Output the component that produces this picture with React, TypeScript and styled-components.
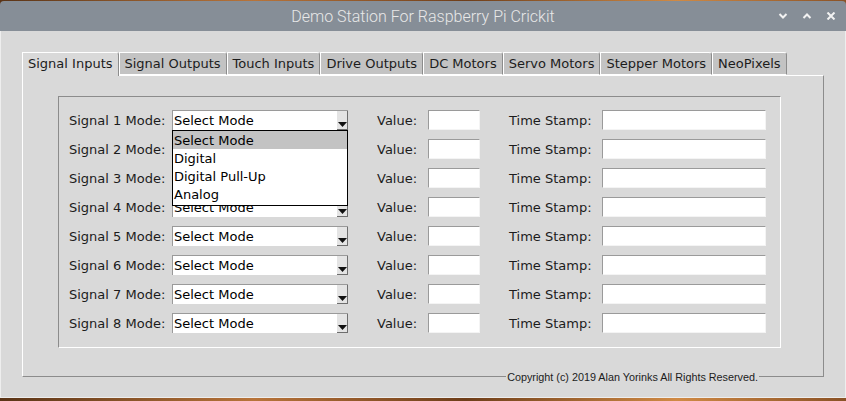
import React from "react";
import styled, { createGlobalStyle } from "styled-components";

const GlobalStyle = createGlobalStyle`
  html, body {
    margin: 0;
    padding: 0;
    overflow: hidden;
  }
  body {
    width: 846px;
    height: 401px;
    background: linear-gradient(90deg, #5a3417 0%, #b8743a 30%, #6e3e1a 55%, #d08a45 80%, #8a5226 100%);
    font-family: "DejaVu Sans", sans-serif;
  }
`;

const Window = styled.div`
  width: 846px;
  margin-top: 1px;
  display: flex;
  flex-direction: column;
`;

const TitleBar = styled.div`
  height: 30px;
  background: #868e97;
  border-radius: 4px 4px 0 0;
  display: flex;
  align-items: center;
  justify-content: center;
  position: relative;
`;

const Title = styled.span`
  font-family: Roboto, "Liberation Sans", sans-serif;
  font-weight: 300;
  font-size: 16px;
  color: #e8e8e8;
`;

const WindowButtons = styled.div`
  position: absolute;
  right: 10px;
  top: 11px;
  display: flex;
  gap: 14px;
`;

const Body = styled.div`
  height: 367px;
  box-sizing: border-box;
  background: #d9d9d9;
  border-left: 1px solid #eeeeee;
  border-right: 1px solid #eeeeee;
  border-bottom: 1px solid #eeeeee;
  padding: 20px 0 0 21px;
`;

const TabRow = styled.div`
  display: flex;
  align-items: flex-end;
  height: 24px;
  position: relative;
  z-index: 1;
`;

const Tab = styled.div<{ $active?: boolean }>`
  height: ${(p) => (p.$active ? "24px" : "23px")};
  box-sizing: border-box;
  border-top: 1px solid #ffffff;
  border-left: 1px solid #ffffff;
  border-right: 1px solid #8c8c8c;
  border-top-right-radius: 3px;
  background: ${(p) => (p.$active ? "#d9d9d9" : "#c3c3c3")};
  padding: 0 5px;
  font-size: 13px;
  line-height: 22px;
  color: #1c1c1c;
  white-space: nowrap;
  margin-bottom: ${(p) => (p.$active ? "-1px" : "0")};
  border-bottom: ${(p) => (p.$active ? "none" : "1px solid #ffffff")};
`;

const Panel = styled.div`
  width: 802px;
  height: 302px;
  box-sizing: border-box;
  border-top: 1px solid #ffffff;
  border-left: 1px solid #ffffff;
  border-right: 1px solid #8c8c8c;
  border-bottom: 1px solid #8c8c8c;
  padding: 20px 0 0 35px;
  position: relative;
`;

const Legend = styled.span`
  position: absolute;
  right: 64px;
  bottom: -8px;
  background: #d9d9d9;
  font-family: "Liberation Sans", Arial, sans-serif;
  font-size: 10.8px;
  line-height: 14px;
  color: #1c1c1c;
  padding: 0 1px;
`;

const InnerFrame = styled.div`
  width: 723px;
  height: 252px;
  box-sizing: border-box;
  border-top: 1px solid #8c8c8c;
  border-left: 1px solid #8c8c8c;
  border-right: 1px solid #ffffff;
  border-bottom: 1px solid #ffffff;
  padding: 13px 0 0 10px;
  display: grid;
  grid-template-columns: 103px 205px 51px 81px 93px 164px;
  grid-auto-rows: 20px;
  row-gap: 9px;
  align-items: center;
`;

const Label = styled.span`
  font-size: 13px;
  color: #1c1c1c;
  white-space: nowrap;
`;

const ComboWrap = styled.div`
  position: relative;
  width: 176px;
  height: 20px;
`;

const Combo = styled.div`
  height: 20px;
  box-sizing: border-box;
  display: flex;
  background: #ffffff;
  border-top: 1px solid #9a9a9a;
  border-left: 1px solid #9a9a9a;
`;

const ComboText = styled.span`
  flex: 1;
  font-size: 13px;
  line-height: 20px;
  padding-left: 1px;
  color: #000000;
`;

const ArrowButton = styled.div`
  width: 11px;
  box-sizing: border-box;
  background: #e4e4e4;
  border-right: 1px solid #6e6e6e;
  border-bottom: 1px solid #6e6e6e;
  display: flex;
  align-items: flex-end;
  justify-content: center;
  padding-bottom: 2px;
`;

const Entry = styled.div<{ $w: number }>`
  width: ${(p) => p.$w}px;
  height: 20px;
  box-sizing: border-box;
  background: #ffffff;
  border-top: 1px solid #9a9a9a;
  border-left: 1px solid #9a9a9a;
  border-right: 1px solid #f4f4f4;
  border-bottom: 1px solid #f4f4f4;
`;

const ListBox = styled.div`
  position: absolute;
  top: 100%;
  left: 0;
  width: 176px;
  box-sizing: border-box;
  border: 1px solid #000000;
  background: #ffffff;
  padding-bottom: 2px;
  z-index: 2;
`;

const ListItem = styled.div<{ $selected?: boolean }>`
  height: 17px;
  padding: 1px 0 0 1px;
  line-height: 18px;
  font-size: 13px;
  color: #000000;
  background: ${(p) => (p.$selected ? "#c3c3c3" : "transparent")};
`;

const tabs = [
  "Signal Inputs",
  "Signal Outputs",
  "Touch Inputs",
  "Drive Outputs",
  "DC Motors",
  "Servo Motors",
  "Stepper Motors",
  "NeoPixels",
];

const modes = ["Select Mode", "Digital", "Digital Pull-Up", "Analog"];

const Arrow = () => (
  <svg width="9" height="5" viewBox="0 0 9 5">
    <polygon points="0,0 9,0 4.5,5" fill="#111" />
  </svg>
);

const Chevron = ({ up }: { up?: boolean }) => (
  <svg width="10" height="8" viewBox="0 0 10 8">
    <polyline
      points={up ? "1.5,6 5,2.5 8.5,6" : "1.5,2 5,5.5 8.5,2"}
      fill="none"
      stroke="#f2f2f2"
      strokeWidth="2"
    />
  </svg>
);

const Close = () => (
  <svg width="10" height="8" viewBox="0 0 10 8">
    <path d="M1.5 0.5 L8.5 7.5 M8.5 0.5 L1.5 7.5" stroke="#f2f2f2" strokeWidth="2" />
  </svg>
);

export default function App() {
  return (
    <>
      <GlobalStyle />
      <Window>
        <TitleBar>
          <Title>Demo Station For Raspberry Pi Crickit</Title>
          <WindowButtons>
            <Chevron />
            <Chevron up />
            <Close />
          </WindowButtons>
        </TitleBar>
        <Body>
          <TabRow>
            {tabs.map((t, i) => (
              <Tab key={t} $active={i === 0}>
                {t}
              </Tab>
            ))}
          </TabRow>
          <Panel>
            <InnerFrame>
              {Array.from({ length: 8 }, (_, i) => (
                <React.Fragment key={i}>
                  <Label>Signal {i + 1} Mode:</Label>
                  <ComboWrap>
                    <Combo>
                      <ComboText>Select Mode</ComboText>
                      <ArrowButton>
                        <Arrow />
                      </ArrowButton>
                    </Combo>
                    {i === 0 && (
                      <ListBox>
                        {modes.map((m, j) => (
                          <ListItem key={m} $selected={j === 0}>
                            {m}
                          </ListItem>
                        ))}
                      </ListBox>
                    )}
                  </ComboWrap>
                  <Label>Value:</Label>
                  <Entry $w={52} />
                  <Label>Time Stamp:</Label>
                  <Entry $w={164} />
                </React.Fragment>
              ))}
            </InnerFrame>
            <Legend>Copyright (c) 2019 Alan Yorinks All Rights Reserved.</Legend>
          </Panel>
        </Body>
      </Window>
    </>
  );
}
